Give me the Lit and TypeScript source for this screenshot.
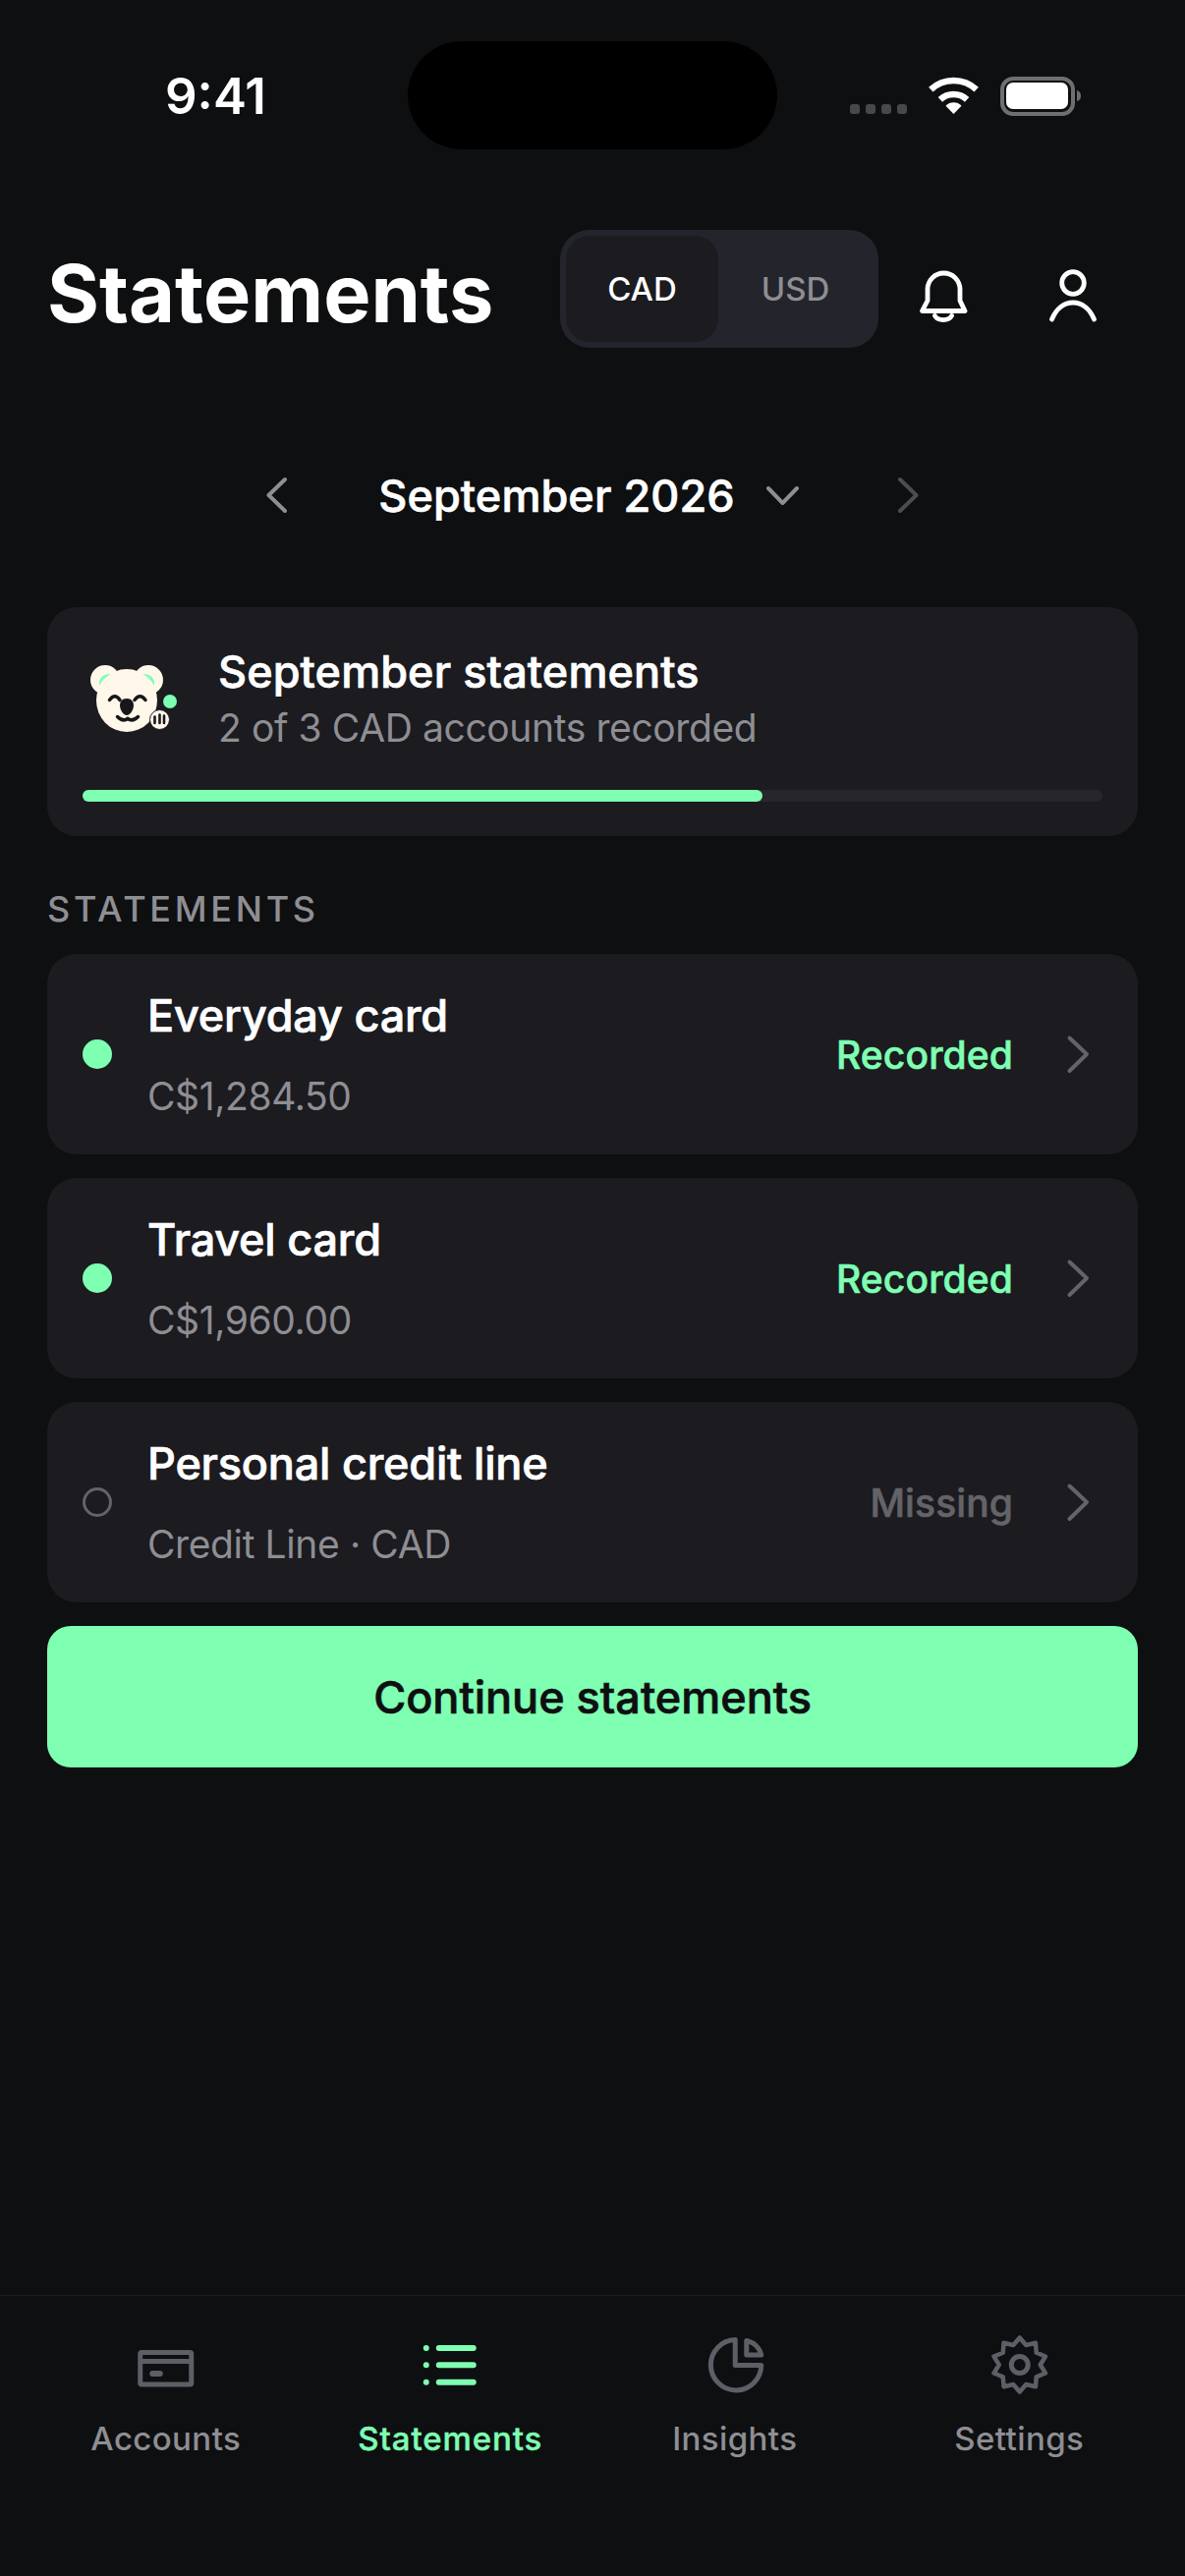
import { LitElement, html, css, svg } from "lit";
import { customElement } from "lit/decorators.js";

const star = (cx: number, cy: number, outer: number, inner: number, n: number) => {
  const pts: string[] = [];
  for (let i = 0; i < n * 2; i++) {
    const r = i % 2 === 0 ? outer : inner;
    const a = (Math.PI * i) / n;
    pts.push(`${(cx + r * Math.sin(a)).toFixed(1)},${(cy - r * Math.cos(a)).toFixed(1)}`);
  }
  return pts.join(" ");
};

const rows = [
  { name: "Everyday card", sub: "C$1,284.50", status: "Recorded", done: true },
  { name: "Travel card", sub: "C$1,960.00", status: "Recorded", done: true },
  { name: "Personal credit line", sub: "Credit Line · CAD", status: "Missing", done: false },
];

const nav = [
  {
    label: "Accounts",
    active: false,
    box: "132.75 2371 72 72",
    icon: svg`<rect x="142.5" y="2394.5" width="52" height="32.5" rx="1.5" fill="none" stroke="currentColor" stroke-width="5"/><path d="M141 2403.5H196" stroke="currentColor" stroke-width="5"/><rect x="152" y="2413" width="13.5" height="6" rx="3" fill="currentColor"/>`,
  },
  {
    label: "Statements",
    active: true,
    box: "422.25 2371 72 72",
    icon: svg`<g fill="currentColor"><circle cx="434" cy="2390" r="3"/><circle cx="434" cy="2407.3" r="3"/><circle cx="434" cy="2424.7" r="3"/></g><path d="M447 2390H482M447 2407.3H482M447 2424.7H482" stroke="currentColor" stroke-width="6" stroke-linecap="round"/>`,
  },
  {
    label: "Insights",
    active: false,
    box: "711.75 2371 72 72",
    icon: svg`<path d="M748 2381.5A25.7 25.7 0 1 0 774.5 2407.5H748Z" fill="none" stroke="currentColor" stroke-width="5" stroke-linejoin="round"/><path d="M759.5 2382.5V2397H774.5A19 19 0 0 0 759.5 2382.5Z" fill="none" stroke="currentColor" stroke-width="5" stroke-linejoin="round"/>`,
  },
  {
    label: "Settings",
    active: false,
    box: "1001.25 2371 72 72",
    icon: svg`<polygon points="${star(1038, 2407, 27.5, 21, 10)}" fill="none" stroke="currentColor" stroke-width="4.5" stroke-linejoin="round"/><circle cx="1038" cy="2407" r="8.5" fill="none" stroke="currentColor" stroke-width="5"/>`,
  },
];

const chevronRight = html`<svg class="rowchev" viewBox="1084 1053 25 40" width="25" height="40"><path d="M1087.5 1056.5L1105 1073L1087.5 1090" fill="none" stroke="currentColor" stroke-width="4" stroke-linecap="round" stroke-linejoin="round"/></svg>`;

@customElement("app-root")
export class AppRoot extends LitElement {
  static styles = css`
    :host {
      display: block;
      background: #0e0f11;
      font-family: Inter, "Noto Sans", sans-serif;
      color: #fff;
    }
    * { box-sizing: border-box; }
    .page { min-height: 2622px; display: flex; flex-direction: column; }
    svg { display: block; flex: none; }

    .status {
      height: 234px;
      padding-top: 42px;
      display: grid;
      grid-template-columns: 415px 376px 1fr;
      align-items: start;
    }
    .time {
      height: 110px;
      padding-left: 168px;
      display: flex;
      align-items: center;
      font-size: 51px;
      font-weight: 600;
    }
    .island { height: 110px; border-radius: 55px; background: #000; }
    .sys { padding: 36px 0 0 74px; }

    .header { height: 120px; padding: 0 48px; display: flex; align-items: center; }
    .title { font-size: 81px; font-weight: 700; line-height: 96px; padding-top: 10px; width: 522px; white-space: nowrap; }
    .segment {
      width: 324px; height: 120px; padding: 6px; border-radius: 30px; background: #23242c;
      display: flex; font-size: 33px; font-weight: 500; color: #8e8e93;
    }
    .segment span { flex: 1; display: flex; align-items: center; justify-content: center; }
    .segment .on { flex: none; width: 155px; border-radius: 24px; background: #1b1b20; color: #fff; }
    .hicons { margin-left: 30px; display: flex; gap: 60px; }

    .date {
      margin-top: 114px; height: 72px; display: flex; align-items: center; justify-content: center;
      font-size: 45px; font-weight: 500; letter-spacing: 0.1px; white-space: nowrap;
      -webkit-text-stroke: 0.7px currentColor;
    }
    .date .prev { margin-right: 92px; color: #8e8e93; }
    .date .down { margin-left: 31.5px; margin-right: 98.5px; color: #8e8e93; }
    .date .next { color: #4c4c52; }

    .card { margin: 78px 48px 0; height: 233px; padding: 36px 36px 35px; background: #1b1b20; border-radius: 30px; }
    .sumtop { display: flex; }
    .sumt {
      font-size: 45px; font-weight: 500; letter-spacing: 0.1px; line-height: 60px; white-space: nowrap;
      -webkit-text-stroke: 0.7px currentColor;
    }
    .sums { font-size: 39px; letter-spacing: -0.39px; line-height: 54px; color: #8e8e93; white-space: nowrap; }
    .track { margin-top: 36px; height: 12px; border-radius: 6px; background: #26262b; }
    .fill { height: 100%; border-radius: 6px; background: #7effb2; }

    .label {
      margin: 50px 48px 22px; font-size: 36px; line-height: 48px; font-weight: 500;
      letter-spacing: 3.7px; color: #8e8e93;
    }
    .list { margin: 0 48px; display: flex; flex-direction: column; gap: 24px; }
    .row {
      height: 204px; padding: 0 48px 0 36px; background: #1b1b20; border-radius: 30px;
      display: flex; align-items: center;
    }
    .dot { width: 30px; height: 30px; border-radius: 50%; background: #7effb2; flex: none; }
    .dot.off { background: none; border: 3.5px solid #636368; }
    .rtext { margin-left: 36px; flex: 1; display: flex; flex-direction: column; gap: 25px; }
    .rname { font-size: 45px; line-height: 60px; font-weight: 500; letter-spacing: -0.2px; -webkit-text-stroke: 0.7px currentColor; }
    .rsub { font-size: 39px; line-height: 54px; letter-spacing: -0.39px; color: #8e8e93; }
    .rstatus {
      font-size: 39px; font-weight: 500; letter-spacing: 0.1px; color: #7effb2; margin-right: 54px;
      -webkit-text-stroke: 0.6px currentColor;
    }
    .rstatus.off { color: #636368; }
    .rowchev { color: #636368; }

    .cta {
      margin: 24px 48px 0; height: 144px; border-radius: 24px; background: #7effb2; color: #0e0f11;
      display: flex; align-items: center; justify-content: center; font-size: 45px; font-weight: 500;
      -webkit-text-stroke: 0.7px currentColor;
    }

    .nav {
      margin-top: auto; height: 286px; border-top: 1.5px solid #1c1c21; padding: 34px 24px 0;
      display: grid; grid-template-columns: repeat(4, 1fr); align-items: start;
    }
    .tab { display: flex; flex-direction: column; align-items: center; color: #5e5e66; }
    .tab.on { color: #7effb2; }
    .tab span { margin-top: 15px; font-size: 33px; line-height: 48px; font-weight: 500; letter-spacing: 0.4px; color: #8e8e93; }
    .tab.on span { color: #7effb2; font-weight: 500; letter-spacing: 0.9px; -webkit-text-stroke: 0.4px currentColor; }
  `;

  render() {
    return html`<div class="page">
      <div class="status">
        <div class="time">9:41</div>
        <div class="island"></div>
        <div class="sys">
          <svg viewBox="865 78 236 40" width="236" height="40">
            <g fill="#48484c">
              <rect x="865" y="106" width="10" height="10" rx="3"/>
              <rect x="881" y="106" width="10" height="10" rx="3"/>
              <rect x="897" y="106" width="10" height="10" rx="3"/>
              <rect x="913" y="106" width="10" height="10" rx="3"/>
            </g>
            <g fill="none" stroke="#fff" stroke-width="6.5">
              <path d="M947.3 91.1A34 34 0 0 1 993.7 91.1"/>
              <path d="M956.9 101.4A20 20 0 0 1 984.1 101.4"/>
            </g>
            <path d="M970.5 116L962.5 107.8A11 11 0 0 1 978.5 107.8Z" fill="#fff"/>
            <rect x="1020" y="80" width="72" height="36" rx="11" fill="none" stroke="#6e6e73" stroke-width="4"/>
            <rect x="1024" y="84" width="63" height="27" rx="7" fill="#fff"/>
            <path d="M1096 92Q1100 93 1100 97.5Q1100 102 1096 103Z" fill="#6e6e73"/>
          </svg>
        </div>
      </div>

      <div class="header">
        <div class="title">Statements</div>
        <div class="segment"><span class="on">CAD</span><span>USD</span></div>
        <div class="hicons">
          <svg viewBox="924 258 72 72" width="72" height="72" fill="none" stroke="#fff" stroke-width="4.8" stroke-linecap="round" stroke-linejoin="round">
            <path d="M944 306V294.5A16.5 16.5 0 0 1 977 294.5V306L982 316.5H938.5Z"/>
            <path d="M951.5 321.5A9 6 0 0 0 968.5 321.5"/>
          </svg>
          <svg viewBox="1056 258 72 72" width="72" height="72" fill="none" stroke="#fff" stroke-width="4.8" stroke-linecap="round">
            <circle cx="1092" cy="288" r="11.3"/>
            <path d="M1070.5 325C1075 314 1083 308 1092 308S1109 314 1113.5 325"/>
          </svg>
        </div>
      </div>

      <div class="date">
        <svg class="prev" viewBox="271 485 23 38" width="23" height="38"><path d="M291 488L274.5 504L291 520" fill="none" stroke="currentColor" stroke-width="4" stroke-linecap="round" stroke-linejoin="round"/></svg>
        <span>September 2026</span>
        <svg class="down" viewBox="780 495 35 21" width="35" height="21"><path d="M783 498L797.5 513L812 498" fill="none" stroke="currentColor" stroke-width="4" stroke-linecap="round" stroke-linejoin="round"/></svg>
        <svg class="next" viewBox="912 485 23 38" width="23" height="38"><path d="M915 488L931.5 504L915 520" fill="none" stroke="currentColor" stroke-width="4" stroke-linecap="round" stroke-linejoin="round"/></svg>
      </div>

      <div class="card">
        <div class="sumtop">
          <svg viewBox="84 654 138 114" width="138" height="114">
            <g fill="#fff8ea">
              <circle cx="107" cy="692" r="15"/>
              <circle cx="151" cy="692" r="15"/>
              <ellipse cx="129" cy="713" rx="31" ry="32"/>
            </g>
            <g fill="#7effb2">
              <path d="M101 698Q100 686 113 686Q105 690 101 698Z"/>
              <path d="M157 698Q158 686 145 686Q153 690 157 698Z"/>
              <circle cx="173" cy="714" r="7"/>
            </g>
            <g fill="none" stroke="#17171a" stroke-width="3.5" stroke-linecap="round">
              <path d="M111.5 712.5Q117 705 122 712.5"/>
              <path d="M137 712.5Q142.5 705 148 712.5"/>
              <path d="M119.5 729.5Q125 735 130 731.5Q135 735 140.5 729.5"/>
            </g>
            <path d="M129 711C134 711 136 714.5 136 718C136 723 132 728 129 728C126 728 122 723 122 718C122 714.5 124 711 129 711Z" fill="#17171a"/>
            <circle cx="162.5" cy="732.5" r="10" fill="#fff8ea" stroke="#1b1b20" stroke-width="1"/>
            <path d="M157.5 729.5V736M162.5 727.5V736M167 728.5V736" fill="none" stroke="#17171a" stroke-width="2.6" stroke-linecap="round"/>
          </svg>
          <div>
            <div class="sumt">September statements</div>
            <div class="sums">2 of 3 CAD accounts recorded</div>
          </div>
        </div>
        <div class="track"><div class="fill" style="width:${(2 / 3) * 100}%"></div></div>
      </div>

      <div class="label">STATEMENTS</div>

      <div class="list">
        ${rows.map(
          (r) => html`<div class="row">
            <div class="dot ${r.done ? "" : "off"}"></div>
            <div class="rtext">
              <div class="rname">${r.name}</div>
              <div class="rsub">${r.sub}</div>
            </div>
            <div class="rstatus ${r.done ? "" : "off"}">${r.status}</div>
            ${chevronRight}
          </div>`
        )}
      </div>

      <div class="cta">Continue statements</div>

      <div class="nav">
        ${nav.map(
          (n) => html`<div class="tab ${n.active ? "on" : ""}">
            <svg viewBox="${n.box}" width="72" height="72">${n.icon}</svg>
            <span>${n.label}</span>
          </div>`
        )}
      </div>
    </div>`;
  }
}
